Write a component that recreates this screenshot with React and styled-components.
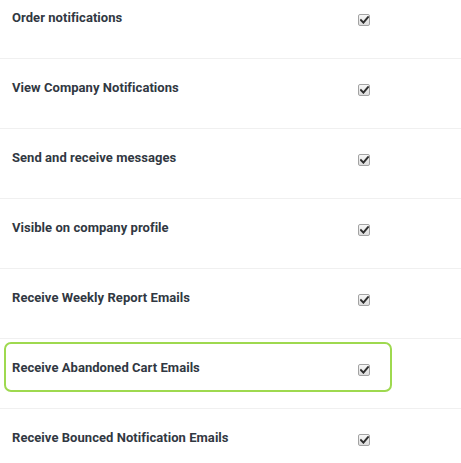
import React from 'react';
import styled, { createGlobalStyle } from 'styled-components';

const GlobalStyle = createGlobalStyle`
  html, body {
    margin: 0;
    padding: 0;
    background: #fff;
  }
  body {
    font-family: Roboto, "Liberation Sans", sans-serif;
  }
`;

const List = styled.div`
  width: 461px;
  margin-top: -11px;
`;

const Row = styled.div`
  padding: 3px 0 16px;
  border-bottom: 1px solid #f0f0f0;
`;

const Item = styled.label`
  display: flex;
  align-items: center;
  height: 46px;
  width: 378px;
  margin-left: 4px;
  padding-left: 6px;
  box-sizing: content-box;
  border: 2px solid ${({ $active }) => ($active ? '#9ed94f' : 'transparent')};
  border-radius: 7px;
`;

const Label = styled.span`
  flex: 1;
  font-size: 13px;
  font-weight: 700;
  color: #313842;
  letter-spacing: 0.05px;
`;

const Box = styled.span`
  display: flex;
  align-items: center;
  justify-content: center;
  width: 10px;
  height: 10px;
  margin: 6px 20px 0 0;
  border: 1px solid #a3a3a3;
  border-radius: 2px;
  background: linear-gradient(#f7f7f7, #dddddd);
`;

const CheckMark = () => (
  <svg width="9" height="8" viewBox="0 0 9 8">
    <path d="M1 4.2 L3.4 6.6 L8 1.2" fill="none" stroke="#2f2f2f" strokeWidth="2" strokeLinecap="square" />
  </svg>
);

const settings = [
  'Order notifications',
  'View Company Notifications',
  'Send and receive messages',
  'Visible on company profile',
  'Receive Weekly Report Emails',
  'Receive Abandoned Cart Emails',
  'Receive Bounced Notification Emails',
];

const App = () => (
  <>
    <GlobalStyle />
    <List>
      {settings.map((name, i) => (
        <Row key={name}>
          <Item $active={i === 5}>
            <Label>{name}</Label>
            <Box>
              <CheckMark />
            </Box>
          </Item>
        </Row>
      ))}
    </List>
  </>
);

export default App;
